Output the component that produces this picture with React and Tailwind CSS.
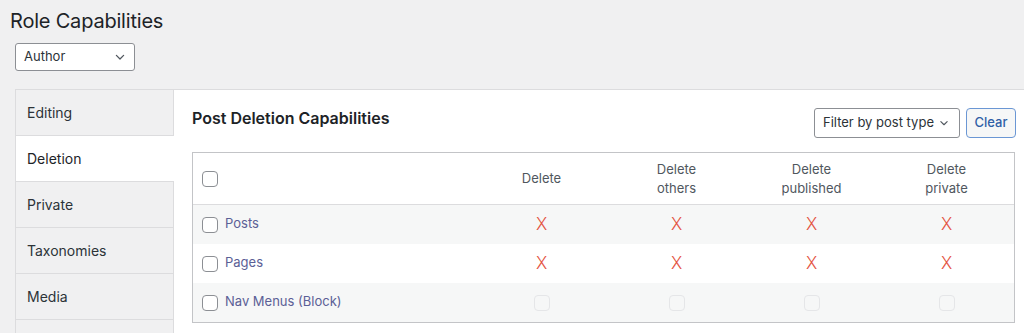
import React from "react";

const tabs = ["Editing", "Deletion", "Private", "Taxonomies", "Media", ""];

const columns = [
  ["Delete"],
  ["Delete", "others"],
  ["Delete", "published"],
  ["Delete", "private"],
];

const rows = [
  { name: "Posts", on: true },
  { name: "Pages", on: true },
  { name: "Nav Menus (Block)", on: false },
];

const Chevron = ({ className }) => (
  <svg viewBox="0 0 20 20" className={className} fill="none" stroke="currentColor" strokeWidth="1.6">
    <path d="M5.5 8l4.5 4.5L14.5 8" strokeLinecap="round" strokeLinejoin="round" />
  </svg>
);

const Box = ({ disabled }) => (
  <span
    className={
      disabled
        ? "inline-block w-4 h-4 rounded-[4px] border border-[#e5e6e8] bg-[#f6f7f7]"
        : "inline-block w-4 h-4 rounded-[4px] border border-[#8c8f94] bg-white"
    }
  />
);

const App = () => {
  return (
    <div className="min-h-screen bg-[#f0f0f1] text-[#1d2327] font-['Inter',sans-serif] overflow-hidden">
      <h1 className="pl-[10px] pt-[8px] text-[20px] leading-[26px] font-normal tracking-[-0.2px]">Role Capabilities</h1>

      <div className="ml-[15px] mt-[9px] w-[120px] h-[28px] bg-white border border-[#8c8f94] rounded-[3px] flex items-center justify-between pl-[8px] pr-[6px] text-[13px] text-[#2c3338]">
        <span>Author</span>
        <Chevron className="w-4 h-4 text-[#50575e]" />
      </div>

      <div className="ml-[15px] mt-[18px] flex">
        <ul className="w-[159px] shrink-0 border-t border-l border-[#dcdcde]">
          {tabs.map((t, i) => (
            <li
              key={i}
              className={
                t === "Deletion"
                  ? "h-[46px] flex items-center pl-[11px] text-[14px] bg-white border-b border-[#dcdcde]"
                  : "h-[46px] flex items-center pl-[11px] text-[14px] text-[#2c3338] bg-[#f0f0f1] border-b border-r border-[#dcdcde]"
              }
            >
              {t}
            </li>
          ))}
        </ul>

        <div className="flex-1 bg-white border-t border-[#dcdcde] pl-[18px] pr-[9px] pt-[18px] pb-10">
          <div className="flex items-center justify-between h-[30px]">
            <h2 className="text-[16px] font-semibold mt-[-10px]">Post Deletion Capabilities</h2>
            <div className="flex items-center gap-[6px] mr-[-1px]">
              <div className="w-[146px] h-[30px] border border-[#8c8f94] rounded-[3px] flex items-center justify-between pl-[8px] pr-[8px] text-[13px] text-[#2c3338] bg-white">
                <span>Filter by post type</span>
                <Chevron className="w-[14px] h-[14px] text-[#50575e]" />
              </div>
              <button className="w-[50px] h-[30px] border border-[#6b97d4] rounded-[4px] bg-[#f6f7f7] text-[13px] font-medium text-[#2f5fa6]">
                Clear
              </button>
            </div>
          </div>

          <div className="mt-[14px] w-[823px] border border-[#c3c4c7]">
            <div className="flex h-[52px] items-center border-b border-[#dcdcde] bg-white">
              <div className="w-[281px] pl-[9px] flex items-center">
                <Box />
              </div>
              {columns.map((c, i) => (
                <div key={i} className="w-[135px] text-center text-[13px] leading-[19px] text-[#50575e]">
                  {c.map((l) => (
                    <div key={l}>{l}</div>
                  ))}
                </div>
              ))}
            </div>
            {rows.map((r, i) => (
              <div
                key={r.name}
                className={
                  i % 2 === 0
                    ? "flex h-[39px] items-center bg-[#f6f7f7]"
                    : "flex h-[39px] items-center bg-white"
                }
              >
                <div className="w-[281px] pl-[9px] flex items-center gap-[7px]">
                  <Box />
                  <span className="text-[13px] leading-[16px] mt-[-3px] text-[#5b6096]">{r.name}</span>
                </div>
                {columns.map((c, j) => (
                  <div key={j} className="w-[135px] flex justify-center">
                    {r.on ? (
                      <span className="text-[17px] leading-none text-[#e4523f] font-light">X</span>
                    ) : (
                      <Box disabled />
                    )}
                  </div>
                ))}
              </div>
            ))}
          </div>
        </div>
      </div>
    </div>
  );
};

export default App;
